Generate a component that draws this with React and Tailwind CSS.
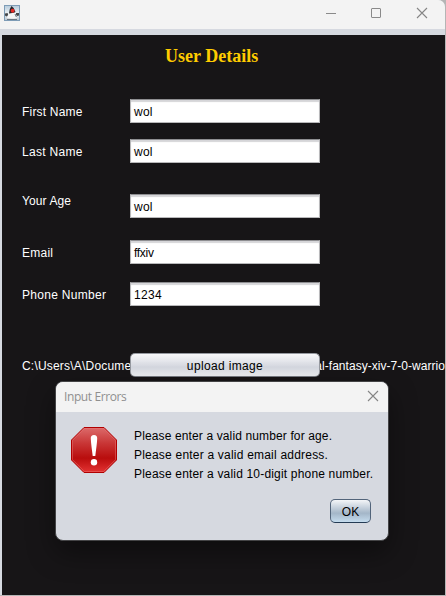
import React from "react";

const fields = [
  { label: "First Name", value: "wol", row: "mt-[64px]", shift: "pt-[2px]", track: "tracking-[0.2px]", valueTrack: "tracking-[0.25px]" },
  { label: "Last Name", value: "wol", row: "mt-4", shift: "pt-[2px]", track: "tracking-[0.3px]", valueTrack: "tracking-[0.25px]" },
  { label: "Your Age", value: "wol", row: "mt-[31px]", shift: "pb-[10px]", track: "tracking-[0.1px]", valueTrack: "tracking-[0.25px]" },
  { label: "Email", value: "ffxiv", row: "mt-[22px]", shift: "pt-[2px]", track: "tracking-[0.25px]", valueTrack: "tracking-[-0.3px]" },
  { label: "Phone Number", value: "1234", row: "mt-[18px]", shift: "pt-[2px]", track: "tracking-[0.3px]", valueTrack: "tracking-[0.3px]" },
];

function JavaIcon() {
  return (
    <svg width="16" height="16" viewBox="0 0 16 16">
      <defs>
        <linearGradient id="sky" x1="0" y1="0" x2="0" y2="1">
          <stop offset="0" stopColor="#b5cbdc" />
          <stop offset="0.55" stopColor="#eef2f5" />
          <stop offset="1" stopColor="#b9c5d0" />
        </linearGradient>
      </defs>
      <rect x="0.5" y="0.5" width="15" height="15" fill="url(#sky)" stroke="#7e9cb6" />
      <path d="M1 8.5L3.5 8L4.5 10L2.5 11.5L1 10.5Z M15 8L12 8L11.5 10L13.5 11L15 10.5Z" fill="#45484b" />
      <path d="M5 7L11.5 7L13 13.6L10 14L7.5 14L3 13.5Z" fill="#f5f5f5" />
      <path d="M3 14.4H13M11 9L12.4 12" stroke="#56616b" strokeWidth="0.9" />
      <path d="M7.5 1L9.6 3L11.5 7L10 7.8L5 8.6L5.8 4Z" fill="#26272b" />
      <circle cx="8.6" cy="5.8" r="2" fill="#e52a25" />
    </svg>
  );
}

function ErrorIcon() {
  return (
    <svg width="48" height="48" viewBox="0 0 48 48">
      <defs>
        <linearGradient id="stop" x1="0" y1="0" x2="0" y2="1">
          <stop offset="0" stopColor="#dc6b6b" />
          <stop offset="0.35" stopColor="#c93636" />
          <stop offset="0.68" stopColor="#b90d0d" />
          <stop offset="1" stopColor="#e43333" />
        </linearGradient>
      </defs>
      <path d="M14 1.5H34L46.5 14V34L34 46.5H14L1.5 34V14Z" fill="url(#stop)" stroke="#b00000" />
      <path d="M14.4 2.5H33.6L45.5 14.4V33.6L33.6 45.5H14.4L2.5 33.6V14.4Z" fill="none" stroke="#ee7777" strokeOpacity="0.45" />
      <path d="M24 9C26.3 9 27.3 10.3 27.2 12.5C27 18 26 24 25.3 30H22.7C22 24 21 18 20.8 12.5C20.7 10.3 21.7 9 24 9Z" fill="#fff" />
      <circle cx="24" cy="36.2" r="3.2" fill="#fff" />
    </svg>
  );
}

function CloseIcon() {
  return (
    <svg width="12" height="12" viewBox="0 0 12 12" fill="none" stroke="#858585" strokeWidth="1.1">
      <path d="M1 1L11 11M11 1L1 11" />
    </svg>
  );
}

function ErrorDialog() {
  return (
    <div className="absolute left-[55px] top-[381px] flex h-[160px] w-[334px] flex-col overflow-hidden rounded-[8px] border border-[#444446] bg-[#d6d9e0] shadow-[0_12px_28px_rgba(0,0,0,0.4)]">
      <div className="flex h-[30px] shrink-0 items-center justify-between bg-[#f3f3f3] pl-2 pr-[9px]">
        <span className="font-['Open_Sans',sans-serif] text-[12px] leading-[30px] tracking-[-0.4px] text-[#8f8f8f]">Input Errors</span>
        <span className="-mt-[2px]"><CloseIcon /></span>
      </div>
      <div className="flex pl-[14px] pt-[14px]">
        <ErrorIcon />
        <div className="ml-4 whitespace-nowrap pt-px text-[12px] leading-[19px] text-black">
          <p className="tracking-[0.13px]">Please enter a valid number for age.</p>
          <p className="tracking-[0.21px]">Please enter a valid email address.</p>
          <p className="tracking-[0.18px]">Please enter a valid 10-digit phone number.</p>
        </div>
      </div>
      <div className="mt-[15px] flex justify-end pr-[17px]">
        <button className="h-[24px] w-[41px] rounded-[5px] border border-[#52647a] border-b-[#243b54] bg-linear-to-b from-[#f4f6f8] via-[#a4b6c8] via-60% to-[#c5dcee] pt-[2px] text-[12px] leading-[20px] text-black">OK</button>
      </div>
    </div>
  );
}

export default function App() {
  return (
    <div className="relative flex h-[596px] w-[446px] flex-col overflow-hidden bg-[#b5b5b5] font-['Liberation_Sans',Arial,sans-serif]">
      <div className="flex h-[595px] w-[445px] flex-col overflow-hidden rounded-tr-[7px] bg-[#d6d9e0]">
        <header className="flex h-[29px] shrink-0 items-center justify-between bg-[#f3f3f3] pl-1 pr-[17px]">
          <span className="-mt-[3px]"><JavaIcon /></span>
          <div className="-mt-[3px] flex items-center gap-[34px]">
            <span className="h-px w-[10px] -translate-x-[2px] bg-[#8a8a8a]" />
            <span className="h-[10px] w-[10px] -translate-x-px rounded-[1px] border border-[#8a8a8a]" />
            <CloseIcon />
          </div>
        </header>
        <main className="ml-[2px] mt-[6px] h-[560px] overflow-hidden bg-[#171517]">
          <h1 className="-mb-[31px] pl-[163px] pt-[11px] font-['Liberation_Serif',serif] text-[18px] font-bold leading-5 text-[#ffcc00]">User Details</h1>
          {fields.map((field) => (
            <div key={field.label} className={"flex h-[24px] items-center pl-5 " + field.row}>
              <label className={"w-[108px] shrink-0 whitespace-nowrap text-[12px] leading-[14px] text-white " + field.shift + " " + field.track}>{field.label}</label>
              <div className={"h-[24px] w-[190px] border border-[#b8b8ba] border-t-[#8e8e91] bg-white px-[3px] pt-[2px] text-[12px] leading-[21px] text-black shadow-[inset_0_2px_1px_#d5d5d8] " + field.valueTrack}>{field.value}</div>
            </div>
          ))}
          <div className="mt-[47px] flex h-[24px] items-center whitespace-nowrap pl-5 text-[12px] text-white">
            <span className="w-[108px] shrink-0 pt-[2px] tracking-[0.2px]">C:\Users\A\Docume</span>
            <button className="relative h-[24px] w-[190px] shrink-0 rounded-[5px] border border-[#9699a0] border-b-[#777b82] bg-linear-to-b from-[#f8f8fa] via-[#d4d7df] via-60% to-[#f0f2f5] pt-[2px] text-[12px] leading-[20px] tracking-[0.35px] text-black">upload image</button>
            <span className="flex w-[125px] shrink-0 justify-end pt-[2px] tracking-[0.04px]">al-fantasy-xiv-7-0-warrio</span>
          </div>
        </main>
      </div>
      <ErrorDialog />
    </div>
  );
}
